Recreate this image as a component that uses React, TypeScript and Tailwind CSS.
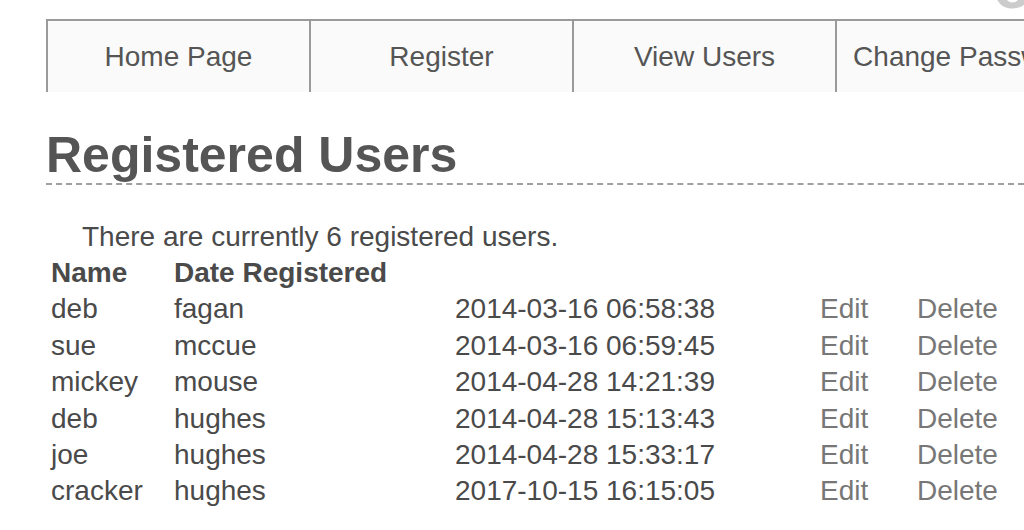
const navItems = ['Home Page', 'Register', 'View Users', 'Change Password']

const users = [
  { first: 'deb', last: 'fagan', date: '2014-03-16 06:58:38' },
  { first: 'sue', last: 'mccue', date: '2014-03-16 06:59:45' },
  { first: 'mickey', last: 'mouse', date: '2014-04-28 14:21:39' },
  { first: 'deb', last: 'hughes', date: '2014-04-28 15:13:43' },
  { first: 'joe', last: 'hughes', date: '2014-04-28 15:33:17' },
  { first: 'cracker', last: 'hughes', date: '2017-10-15 16:15:05' },
]

export default function App() {
  return (
    <div
      className="relative w-[1024px] h-[530px] overflow-hidden bg-white text-[#4a4a4a]"
      style={{ fontFamily: '"Liberation Sans", Arial, sans-serif' }}
    >
      {/* cut-off logo letter at the top right */}
      <span className="absolute right-[-8px] top-[-46px] text-[64px] font-bold leading-none text-[#cccccc]">
        o
      </span>

      <div className="pl-[46px] pt-[19px]">
        <nav className="flex border-t-2 border-[#9a9a9a] w-max">
          {navItems.map((item) => (
            <div
              key={item}
              className="w-[263px] h-[71px] shrink-0 border-l-2 border-[#9a9a9a] bg-[#fafafa] flex items-center justify-center text-[28px] text-[#555] whitespace-nowrap"
            >
              {item}
            </div>
          ))}
        </nav>

        <h1 className="mt-[35px] text-[50px] font-bold leading-[56px] text-[#555] border-b-2 border-dashed border-[#a0a0a0]">
          Registered Users
        </h1>

        <p className="mt-[34px] pl-[36px] text-[28px] leading-[36px]">
          There are currently 6 registered users.
        </p>

        <table className="text-[28px] leading-[36.4px] border-collapse">
          <thead>
            <tr>
              <th className="w-[128px] pl-[5px] text-left font-bold p-0">Name</th>
              <th className="w-[281px] text-left font-bold p-0 whitespace-nowrap">Date Registered</th>
              <th className="w-[365px] p-0" />
              <th className="w-[97px] p-0" />
              <th className="p-0" />
            </tr>
          </thead>
          <tbody>
            {users.map((u, i) => (
              <tr key={i}>
                <td className="pl-[5px] p-0">{u.first}</td>
                <td className="p-0">{u.last}</td>
                <td className="p-0">{u.date}</td>
                <td className="p-0 text-[#777]">Edit</td>
                <td className="p-0 text-[#777]">Delete</td>
              </tr>
            ))}
          </tbody>
        </table>
      </div>
    </div>
  )
}
